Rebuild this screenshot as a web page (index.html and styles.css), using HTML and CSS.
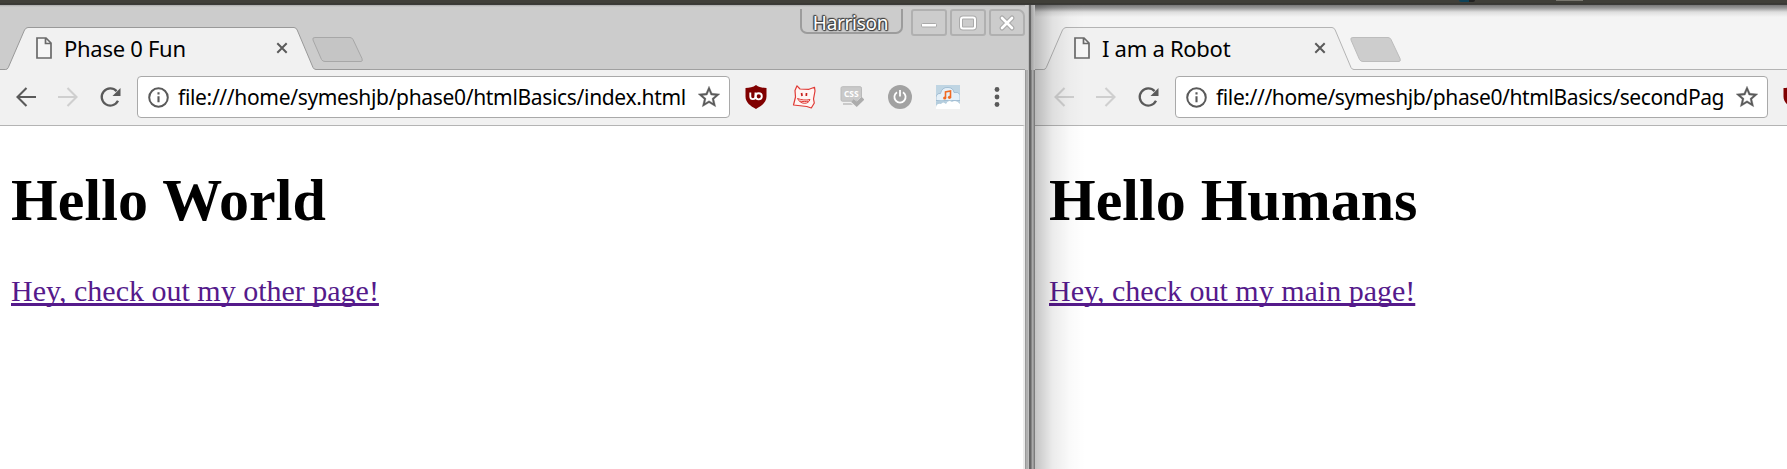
FILE: index.html
```html
<!DOCTYPE html>
<html lang="en">
<head>
<meta charset="utf-8">
<title>Phase 0 Fun</title>
<link rel="stylesheet" href="styles.css">
</head>
<body>
<svg class="defs" width="0" height="0">
  <defs>
    <symbol id="file" viewBox="0 0 16 22"><path d="M1 1h9l5 5v15H1zM9.500 1v5.500H15" fill="#f6f6f6" stroke="#6a6a6a" stroke-width="1.700"/></symbol>
    <symbol id="close" viewBox="0 0 12 12"><path d="M1.300 1.300l9.400 9.400M10.700 1.300l-9.400 9.400" stroke="#5a5a5a" stroke-width="2"/></symbol>
    <symbol id="back" viewBox="0 0 20 20"><path d="M20 10H2M10.500 1L1.500 10l9 9" fill="none" stroke="currentColor" stroke-width="2.100"/></symbol>
    <symbol id="forward" viewBox="0 0 20 20"><path d="M0 10h18M9.500 1l9 9-9 9" fill="none" stroke="currentColor" stroke-width="2.100"/></symbol>
    <symbol id="reload" viewBox="0 0 21 21"><path d="M16.600 4.100A8.600 8.600 0 1 0 18 13.800" fill="none" stroke="#5a5a5a" stroke-width="2.300"/><path d="M20.500 1v8h-8z" fill="#5a5a5a"/></symbol>
    <symbol id="info" viewBox="0 0 21 21"><circle cx="10.500" cy="10.500" r="9.300" fill="none" stroke="#5a5a5a" stroke-width="2"/><path d="M10.500 9.300v6M10.500 5.300v2.200" stroke="#5a5a5a" stroke-width="2.100"/></symbol>
    <symbol id="star" viewBox="0 0 24 24"><path d="M22 9.240l-7.190-.62L12 2 9.190 8.630 2 9.240l5.460 4.730L5.820 21 12 17.270 18.180 21l-1.630-7.030L22 9.240zM12 15.400l-3.760 2.270 1-4.280-3.320-2.880 4.380-.38L12 6.100l1.710 4.040 4.380.38-3.320 2.880 1 4.280L12 15.400z" fill="#5a5a5a" stroke="#5a5a5a" stroke-width=".3"/></symbol>
    <symbol id="shield" viewBox="0 0 24 24"><path d="M12 0c3 2.200 6.500 3 10.500 3v8.500c0 6-5 9.500-10.500 12.500C6.500 21 1.500 17.500 1.500 11.500V3C5.500 3 9 2.200 12 0z" fill="#800000"/><path d="M6.300 7.500v4a2.600 2.600 0 0 0 5.200 0V7.500" fill="none" stroke="#fff" stroke-width="1.900"/><circle cx="14.700" cy="11.300" r="3.100" fill="none" stroke="#fff" stroke-width="1.900"/></symbol>
  </defs>
</svg>
<div class="panel"><i class="panel-dot"></i><i class="panel-pill"></i></div>
<main class="desktop">
  <section class="window front">
    <div class="strip">
      <svg class="tabs" width="370" height="42" viewBox="0 0 370 42"><path class="tab-shape" d="M-1 41.500H5.500Q7.500 41.500 8.300 39.500L24.500 2Q26 -.5 28 -.5H294Q296 -.5 297.200 2L313 39.500Q314 41.500 316 41.500H370V43H-1z"/><path class="tab-line" d="M0 41.500H5.500Q7.500 41.500 8.300 39.500L24.500 2Q26 -.5 28 -.5H294Q296 -.5 297.200 2L313 39.500Q314 41.500 316 41.500H370"/><path class="new-tab" d="M315 9.500H350Q352 9.500 353 11.500L362 30.500Q363 33.500 361 33.500H325Q322.500 33.500 321.500 31.500L313 12Q312 9.500 315 9.500z"/></svg>
      <div class="tab"><svg class="file"><use href="#file"/></svg><span class="title">Phase 0 Fun</span><svg class="close"><use href="#close"/></svg></div>
      <div class="controls">
        <span class="user">Harrison</span>
        <span class="ctl"><svg width="32" height="23"><rect x="8.500" y="12.500" width="15" height="3.500" rx="1" fill="#fff" stroke="#aaa"/></svg></span>
        <span class="ctl"><svg width="32" height="23"><rect x="9" y="6.500" width="14" height="11" rx="2" fill="none" stroke="#aaa" stroke-width="4"/><rect x="9" y="6.500" width="14" height="11" rx="2" fill="none" stroke="#fff" stroke-width="2"/></svg></span>
        <span class="ctl"><svg width="32" height="23" fill="none" stroke-linecap="round"><path d="M11 7l10 10M21 7L11 17" stroke="#aaa" stroke-width="5"/><path d="M11 7l10 10M21 7L11 17" stroke="#fff" stroke-width="2.600"/></svg></span>
      </div>
    </div>
    <div class="toolbar">
      <svg class="nav on"><use href="#back"/></svg><svg class="nav"><use href="#forward"/></svg><svg class="reload"><use href="#reload"/></svg>
      <div class="omnibox"><svg class="info"><use href="#info"/></svg><span class="url">file:///home/symeshjb/phase0/htmlBasics/index.html</span><svg class="star"><use href="#star"/></svg></div>
      <div class="extensions">
        <svg class="ext"><use href="#shield"/></svg>
        <svg class="ext" viewBox="0 0 24 24" fill="none" stroke="#e03a35" stroke-linejoin="round"><path d="M3 5.500L5 .8 8 4l9 .3 5.500-2L23 6l-1.500 8 .8 4-3 5-4.500-1.500L1.500 20 3.500 12z" fill="#fff6f4" stroke-width="1.200"/><path d="M9.500 8l.6 3M14.500 8l-.2 3" stroke="#c8201c" stroke-width="1.700"/><path d="M5.500 13.500c4 1.500 8.500 2 12.500 1-.8 2.500-2.800 4-5.800 3.800-3.200-.2-5.200-2-6.700-4.800zM7.500 16c3 .7 6.500.8 9 .2" stroke-width="1"/></svg>
        <svg class="ext" viewBox="0 0 24 24"><rect x="1" y="1.700" width="20.500" height="14.500" rx="1.500" fill="#c9c9c9" stroke="#bababa"/><path d="M3 19h10" stroke="#c6c6c6" stroke-width="1.800"/><text x="11.300" y="12.300" class="css-label">CSS</text><path d="M12.500 16l4 4 6.500-6.500" fill="none" stroke="#f1f1f1" stroke-width="5"/><path d="M12.500 15.500l4.200 3.700 6.300-6" fill="none" stroke="#adadad" stroke-width="4"/></svg>
        <svg class="ext" viewBox="0 0 24 24"><circle cx="12" cy="12" r="12" fill="#a2a2a2"/><path d="M9 7.300a5.600 5.600 0 1 0 6 0M12 5v6.500" fill="none" stroke="#fff" stroke-width="1.800"/></svg>
        <svg class="ext" viewBox="0 0 24 24"><rect width="24" height="24" fill="#bfd5e3"/><path d="M0 12q1-4 4.500-3.500Q6 2 12 2.500q5 0 6 5 4-1 6 2v6H0z" fill="#e5f0f8" stroke="#8fafc8" stroke-width=".7"/><path d="M0 17q6-4 10 0 5-4 7 0 4-3 7 1v6H0z" fill="#b4cddd"/><path d="M0 22q1-4 5-3 2-3 5 0 2-5 6-2 4-3 8 2v5H0z" fill="#fff"/><path d="M9.500 13V7l5-1v6.500" fill="none" stroke="#f06a22" stroke-width="1.600"/><circle cx="8.700" cy="13" r="1.600" fill="#f06a22"/><circle cx="13.500" cy="12.300" r="1.600" fill="#f06a22"/></svg>
      </div>
      <svg class="menu" width="6" height="22" fill="#5a5a5a"><circle cx="3" cy="3.500" r="2.400"/><circle cx="3" cy="11" r="2.400"/><circle cx="3" cy="18.500" r="2.400"/></svg>
    </div>
    <article class="page"><h1 class="world">Hello World</h1><a class="link" href="#">Hey, check out my other page!</a></article>
  </section>
  <div class="frame"><div class="frame-top"></div></div>
  <section class="window rear">
    <div class="strip">
      <svg class="tabs" width="370" height="42" viewBox="0 0 370 42"><path class="tab-shape" d="M-3 41.500H5.500Q7.500 41.500 8.300 39.500L24.500 2Q26 -.5 28 -.5H294Q296 -.5 297.200 2L313 39.500Q314 41.500 316 41.500H370V43H-3z"/><path class="tab-line" d="M-3 41.500H5.500Q7.500 41.500 8.300 39.500L24.500 2Q26 -.5 28 -.5H294Q296 -.5 297.200 2L313 39.500Q314 41.500 316 41.500H370"/><path class="new-tab" d="M315 9.500H350Q352 9.500 353 11.500L362 30.500Q363 33.500 361 33.500H325Q322.500 33.500 321.500 31.500L313 12Q312 9.500 315 9.500z"/></svg>
      <div class="tab"><svg class="file"><use href="#file"/></svg><span class="title">I am a Robot</span><svg class="close"><use href="#close"/></svg></div>
    </div>
    <div class="toolbar">
      <svg class="nav"><use href="#back"/></svg><svg class="nav"><use href="#forward"/></svg><svg class="reload"><use href="#reload"/></svg>
      <div class="omnibox"><svg class="info"><use href="#info"/></svg><span class="url">file:///home/symeshjb/phase0/htmlBasics/secondPag</span><svg class="star"><use href="#star"/></svg></div>
      <div class="extensions"><svg class="ext"><use href="#shield"/></svg></div>
    </div>
    <article class="page"><h1>Hello Humans</h1><a class="link" href="#">Hey, check out my main page!</a></article>
    <div class="shade"></div>
  </section>
</main>
</body>
</html>
```
FILE: styles.css
```css
* { box-sizing: border-box; }
body { margin: 0; width: 1787px; height: 469px; overflow: hidden; background: #fff; font-family: "Noto Sans", "Open Sans", sans-serif; }
svg { display: block; flex: none; }
.defs { position: absolute; }
.panel { height: 5px; background: linear-gradient(#403f39 0 3px, #33322e 4px, #444 5px); position: relative; }
.panel-dot { position: absolute; left: 1459px; top: 0; width: 16px; height: 2px; border-radius: 0 0 6px 6px; background: linear-gradient(90deg, #0e4258 60%, #222 60%); }
.panel-pill { position: absolute; left: 1556px; top: 0; width: 27px; height: 1px; background: #78766e; }
.desktop { display: flex; height: 464px; }
.window { display: flex; flex-direction: column; position: relative; overflow: hidden; flex: none; }
.front { width: 1025px; }
.rear { width: 752px; }
.frame { width: 10px; flex: none; background: linear-gradient(90deg, #999 0 1px, #b0b0b0 1px 3px, #c0c0c0 3px 4px, #666 4px 6px, #868686 6px 7px, #aaa 7px 8px, #999 8px 9px, #7c7c7c 9px 10px); }
.frame-top { height: 65px; background: linear-gradient(90deg, #ccc 0 3px, #bbb 3px 4px, #666 4px 6px, #a0a0a0 6px, #c4c4c4 10px); }
.strip { height: 65px; flex: none; position: relative; display: flex; justify-content: space-between; border-bottom: 1px solid #a0a0a0; }
.front .strip { background: linear-gradient(#aaa 0, #ccc 2px); }
.rear .strip { background: linear-gradient(#777 0, #999 3px, #ddd 7px, #f4f4f4 12px); border-color: #b4b4b4; }
.tabs { position: absolute; left: 0; top: 23px; overflow: visible; }
.rear .tabs { left: 3px; }
.tab-shape { fill: #f1f1f1; }
.tab-line { fill: none; stroke: #999; }
.rear .tab-line { stroke: #b4b4b4; }
.new-tab { fill: #c5c5c5; stroke: #a7a7a7; }
.rear .new-tab { fill: #cdcdcd; stroke: #bcbcbc; }
.tab { position: relative; display: flex; align-items: center; height: 42px; margin-top: 22px; padding-left: 36px; width: 288px; }
.rear .tab { margin-left: 3px; }
.file { width: 16px; height: 22px; }
.title { margin-left: 12px; font-size: 22px; line-height: 30px; letter-spacing: -.28px; white-space: nowrap; flex: 1; }
.close { width: 12px; height: 12px; }
.controls { display: flex; align-items: flex-start; padding-top: 4px; }
.user { width: 103px; height: 25px; margin-right: 8px; border: 2px solid #9c9c9c; border-top: 0; border-radius: 0 0 7px 7px; color: #fff; font-size: 19px; line-height: 28px; letter-spacing: -.3px; text-align: center; padding-right: 2px; text-shadow: 1px 0 1px #444, -1px 0 1px #444, 0 1px 1px #444, 0 -1px 1px #444, 1px 1px 1px #444, -1px -1px 1px #444; }
.ctl { width: 36px; height: 27px; margin-right: 3px; border: 2px solid #b0b0b0; border-radius: 3px; }
.ctl:last-child { margin-right: 0; border-top-right-radius: 7px; }
.toolbar { height: 56px; flex: none; display: flex; align-items: center; background: #f1f1f1; border-bottom: 1px solid #b4b4b4; padding: 0 0 1px 16px; }
.front .toolbar, .front .page { border-right: 2px solid #ececec; }
.rear .toolbar { padding-left: 19px; }
.nav { width: 20px; height: 20px; color: #cfcfcf; margin-right: 22px; }
.nav.on { color: #5a5a5a; }
.reload { width: 21px; height: 21px; margin-right: 16px; }
.omnibox { width: 593px; height: 42px; flex: none; border: 1px solid #a9a9a9; border-radius: 4px; background: #fff; display: flex; align-items: center; padding-left: 10px; }
.info { width: 21px; height: 21px; margin-right: 9px; }
.url { font-size: 21px; line-height: 30px; width: 518px; letter-spacing: -.33px; white-space: nowrap; flex: none; }
.rear .url { letter-spacing: -.39px; }
.star { width: 26px; height: 26px; }
.extensions { display: flex; gap: 24px; margin-left: 14px; flex: none; }
.ext { width: 24px; height: 24px; }
.css-label { font: bold 8.500px "Open Sans", sans-serif; fill: #fff; text-anchor: middle; }
.menu { margin-left: 34px; }
.page { padding: 40px 0 0 11px; flex: 1; background: #fff; }
.rear .page { padding-left: 14px; }
h1, .link { font-family: "Liberation Serif", "Times New Roman", serif; white-space: nowrap; }
h1 { margin: 0 0 40px; font-size: 60px; line-height: 68px; }
.world { letter-spacing: .1px; }
.link { font-size: 30px; line-height: 34px; color: #551a8b; text-decoration-thickness: 3px; text-underline-offset: 2px; text-decoration-skip-ink: none; display: block; width: max-content; }
.shade { position: absolute; inset: 0 auto 0 0; width: 50px; background: linear-gradient(90deg, rgba(0,0,0,.23), rgba(0,0,0,.08) 35%, rgba(0,0,0,.02) 70%, transparent); }
```
